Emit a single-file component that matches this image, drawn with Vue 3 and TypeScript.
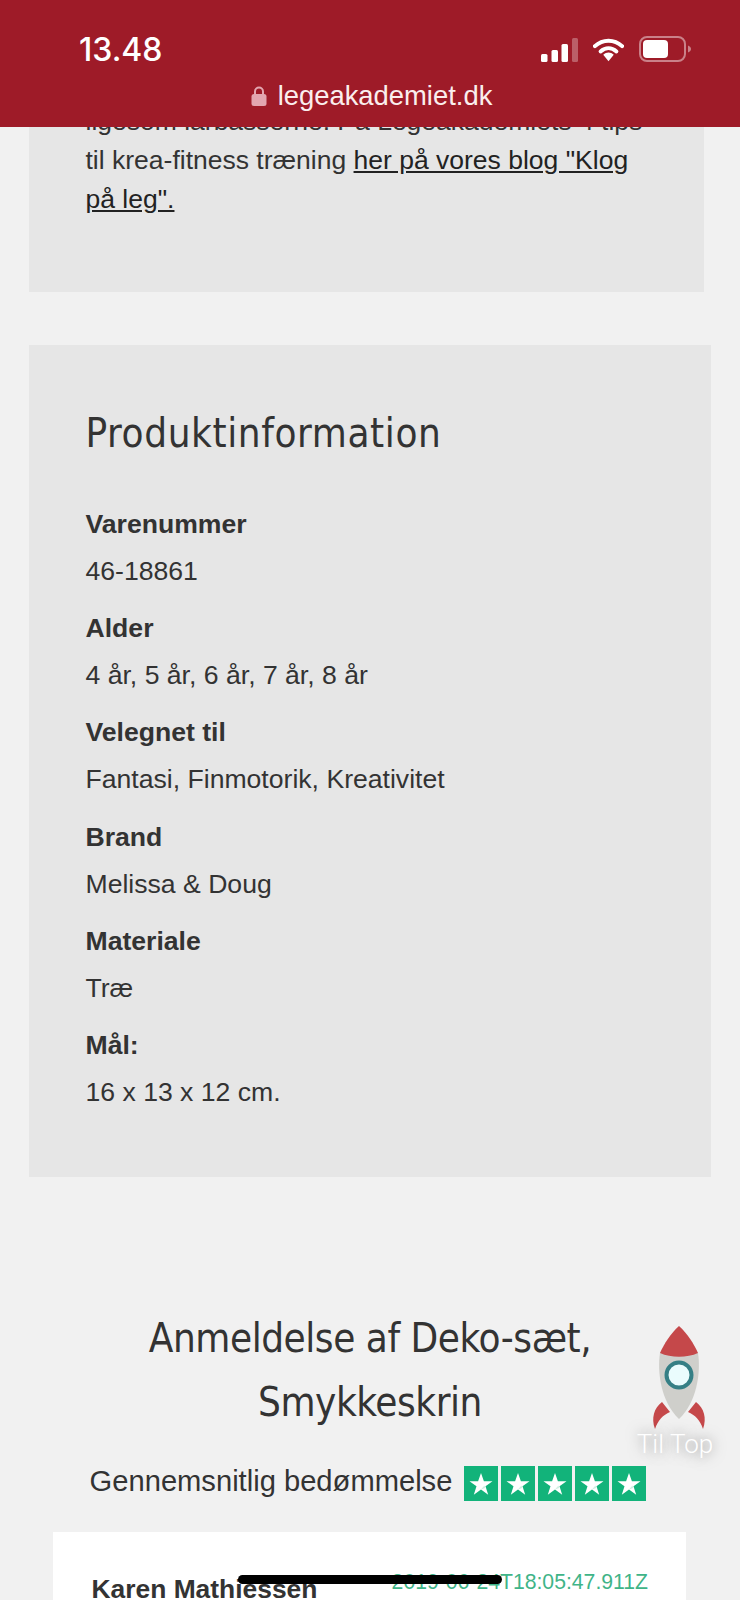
<template>
  <div class="page">
    <header class="topbar">
      <div class="status">
        <span class="clock">13.48</span>
        <div class="status-icons">
          <svg width="37" height="25" viewBox="0 0 37 25">
            <rect x="0" y="17" width="6.5" height="8" rx="1.5" fill="#fff" />
            <rect x="10.5" y="13" width="6.5" height="12" rx="1.5" fill="#fff" />
            <rect x="20.5" y="7" width="6.5" height="18" rx="1.5" fill="#fff" />
            <rect x="31" y="1" width="6" height="24" rx="1.5" fill="#fff" opacity="0.3" />
          </svg>
          <svg width="31" height="25" viewBox="0 0 32 24">
            <path d="M2 8.5C10 1 22 1 30 8.5" fill="none" stroke="#fff" stroke-width="4.2" stroke-linecap="round" />
            <path d="M7.8 14C12.8 9.6 19.2 9.6 24.2 14" fill="none" stroke="#fff" stroke-width="4" stroke-linecap="round" />
            <path d="M10.6 17.4C14 14.3 18 14.3 21.4 17.4L16 24Z" fill="#fff" />
          </svg>
          <svg width="52" height="26" viewBox="0 0 52 26">
            <rect x="1" y="1" width="45" height="24" rx="7" fill="none" stroke="#fff" stroke-opacity="0.45" stroke-width="2" />
            <rect x="4" y="4" width="25" height="18" rx="4" fill="#fff" />
            <path d="M49 9.5C51 10.5 52 11.5 52 13C52 14.5 51 15.5 49 16.5Z" fill="#fff" fill-opacity="0.45" />
          </svg>
        </div>
      </div>
      <div class="address">
        <svg width="16" height="20" viewBox="0 0 16 20">
          <path d="M4 9V5.5a4 4 0 0 1 8 0V9" fill="none" stroke="#e3a6b0" stroke-width="2" />
          <rect x="0.5" y="8" width="15" height="12" rx="2.5" fill="#e3a6b0" />
        </svg>
        <span>legeakademiet.dk</span>
      </div>
    </header>

    <section class="card intro">
      <p>
        ligesom larbasserne. På Legeakademiets 4 tips til krea-fitness træning
        <a href="#">her på vores blog "Klog på leg".</a>
      </p>
    </section>

    <section class="card info">
      <h2>Produktinformation</h2>
      <dl>
        <template v-for="row in infoRows" :key="row.label">
          <dt>{{ row.label }}</dt>
          <dd>{{ row.value }}</dd>
        </template>
      </dl>
    </section>

    <section class="reviews">
      <h2>Anmeldelse af Deko-sæt,<br />Smykkeskrin</h2>
      <div class="average">
        <span>Gennemsnitlig bedømmelse</span>
        <div class="stars">
          <span v-for="n in 5" :key="n" class="star-box">
            <svg width="24" height="24" viewBox="0 0 24 24">
              <path d="M12 1l2.9 8.2h8.6l-7 5.1 2.7 8.4-7.2-5.2-7.2 5.2 2.7-8.4-7-5.1h8.6z" fill="#fff" />
              <path d="M15.4 13.6l.8 2.4-4.2 1.5z" fill="#cdeee0" />
            </svg>
          </span>
        </div>
      </div>
      <article class="review">
        <strong>Karen Mathiessen</strong>
        <time>2019-06-24T18:05:47.911Z</time>
      </article>
    </section>

    <div class="to-top">
      <svg class="rocket" width="56" height="106" viewBox="2 0 56 106">
        <path d="M13 76C5 82 2 92 6 103C9 94 14 89 21 86Z" fill="#c5484a" />
        <path d="M47 76C55 82 58 92 54 103C51 94 46 89 39 86Z" fill="#c5484a" />
        <path d="M11 27C15 23 45 23 49 27C52 46 48 76 30 93C12 76 8 46 11 27Z" fill="#cfcfcb" />
        <path d="M30 0C38 7 45 18 49 27C38 32 22 32 11 27C15 18 22 7 30 0Z" fill="#c5484a" />
        <circle cx="30" cy="49" r="12.5" fill="#eafcfd" stroke="#357f85" stroke-width="4" />
      </svg>
      <span>Til Top</span>
    </div>

    <div class="home-bar"></div>
  </div>
</template>

<script setup lang="ts">
interface InfoRow {
  label: string
  value: string
}

const infoRows: InfoRow[] = [
  { label: 'Varenummer', value: '46-18861' },
  { label: 'Alder', value: '4 år, 5 år, 6 år, 7 år, 8 år' },
  { label: 'Velegnet til', value: 'Fantasi, Finmotorik, Kreativitet' },
  { label: 'Brand', value: 'Melissa & Doug' },
  { label: 'Materiale', value: 'Træ' },
  { label: 'Mål:', value: '16 x 13 x 12 cm.' }
]
</script>

<style>
html,
body {
  margin: 0;
  background: #f1f1f1;
}
</style>

<style scoped>
.page {
  position: relative;
  width: 740px;
  height: 1600px;
  overflow: hidden;
  background: #f1f1f1;
  color: #333;
  font-family: "Liberation Sans", Arial, sans-serif;
  font-size: 26.6px;
}

.topbar {
  position: absolute;
  top: 0;
  left: 0;
  right: 0;
  z-index: 2;
  height: 127px;
  background: #9e1b28;
  color: #fff;
  box-sizing: border-box;
  padding-top: 31px;
}

.status {
  display: flex;
  justify-content: space-between;
  align-items: center;
  height: 36px;
  padding: 0 49px 0 79px;
}

.clock {
  font-family: Inter, sans-serif;
  font-size: 32px;
  font-weight: 500;
}

.status-icons {
  display: flex;
  align-items: center;
  gap: 15px;
}

.address {
  display: flex;
  justify-content: center;
  align-items: center;
  gap: 11px;
  margin-top: 13px;
  padding-left: 3px;
  font-size: 27.4px;
  color: #fbeeee;
}

.card {
  background: #e6e6e6;
  box-sizing: border-box;
  margin-left: 29px;
}

.intro {
  width: 675px;
  height: 292px;
  padding: 102px 50px 0 56.5px;
  font-size: 26.5px;
}

.intro p {
  margin: 0;
  line-height: 39px;
}

.intro a {
  color: #222;
}

.info {
  width: 682px;
  height: 832px;
  margin-top: 53px;
  padding: 63px 56px 0 56.5px;
}

h2 {
  margin: 0;
  font-family: "DejaVu Sans Condensed", Lato, sans-serif;
  font-weight: 400;
  font-size: 40px;
  color: #333;
}

.info h2 {
  line-height: 50px;
  letter-spacing: 0.6px;
}

dl {
  margin: 43px 0 0;
}

dt {
  font-weight: 700;
  line-height: 47px;
}

dd {
  margin: 0 0 10.2px;
  line-height: 47px;
}

.reviews {
  margin-top: 129px;
  display: flex;
  flex-direction: column;
  align-items: center;
}

.reviews h2 {
  width: 682px;
  text-align: center;
  line-height: 64px;
  letter-spacing: -0.45px;
}

.average {
  display: flex;
  align-items: center;
  gap: 12px;
  margin: 28px 0 0 -4px;
  font-size: 29.15px;
}

.stars {
  display: flex;
  gap: 3px;
  margin-top: 4px;
}

.star-box {
  display: flex;
  justify-content: center;
  align-items: center;
  width: 34px;
  height: 35px;
  background: #12b37a;
}

.review {
  display: flex;
  justify-content: space-between;
  align-items: flex-start;
  box-sizing: border-box;
  width: 633px;
  height: 200px;
  margin: 31px 0 0 -1px;
  padding: 38px 38px 0 38.5px;
  background: #fff;
}

.review strong {
  padding-top: 4px;
  font-size: 26.4px;
}

.review time {
  font-size: 21.2px;
  color: #3fb488;
}

.to-top {
  position: absolute;
  left: 636px;
  top: 1326px;
  width: 78px;
  display: flex;
  flex-direction: column;
  align-items: center;
  color: #fff;
  text-shadow: 0 0 14px rgba(0, 0, 0, 0.55);
  font-size: 26px;
  font-family: Roboto, sans-serif;
  font-weight: 300;
}

.to-top span {
  white-space: nowrap;
  margin-top: -3px;
}

.rocket {
  margin-left: 8px;
}

.home-bar {
  position: absolute;
  left: 238px;
  top: 1575px;
  width: 264px;
  height: 9px;
  border-radius: 5px;
  background: #000;
}
</style>
